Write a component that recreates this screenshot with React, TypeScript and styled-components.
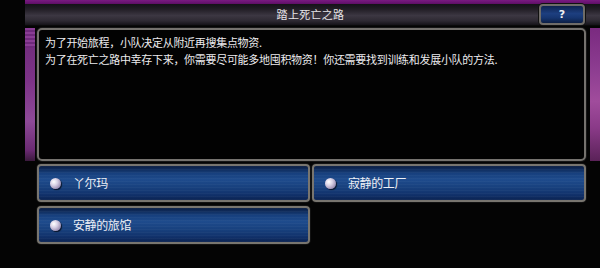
import React from 'react'
import styled, { createGlobalStyle } from 'styled-components'

const GlobalStyle = createGlobalStyle`
  html, body {
    margin: 0;
    padding: 0;
    background: #050505;
  }
  body {
    font-family: "Noto Sans CJK SC", "Noto Sans", sans-serif;
  }
`

const choices = [
  { id: 'yama', label: '丫尔玛' },
  { id: 'factory', label: '寂静的工厂' },
  { id: 'inn', label: '安静的旅馆' },
]

const App: React.FC = () => {
  return (
    <>
      <GlobalStyle />
      <StyledScreen>
        <StyledTopBar />
        <StyledHeader>
          <StyledTitle>踏上死亡之路</StyledTitle>
          <StyledHelpButton>?</StyledHelpButton>
        </StyledHeader>
        <StyledBody>
          <StyledSideStrip side="left" />
          <StyledPanel>
            <StyledLine>为了开始旅程，小队决定从附近再搜集点物资.</StyledLine>
            <StyledLine>为了在死亡之路中幸存下来，你需要尽可能多地囤积物资！你还需要找到训练和发展小队的方法.</StyledLine>
          </StyledPanel>
          <StyledSideStrip side="right" />
        </StyledBody>
        <StyledChoices>
          {choices.map(c => (
            <StyledChoice key={c.id}>
              <StyledBullet />
              <StyledChoiceLabel>{c.label}</StyledChoiceLabel>
            </StyledChoice>
          ))}
        </StyledChoices>
      </StyledScreen>
    </>
  )
}

const StyledScreen = styled.div`
  width: 600px;
  height: 268px;
  padding-left: 25px;
  box-sizing: border-box;
  background: #040404;
  display: flex;
  flex-direction: column;
  overflow: hidden;
`

const StyledTopBar = styled.div`
  height: 4px;
  background: linear-gradient(180deg, #7a1a82 0%, #5e0f66 100%);
`

const StyledHeader = styled.div`
  height: 21px;
  display: flex;
  align-items: center;
  justify-content: center;
  position: relative;
  background: linear-gradient(
    180deg,
    #141218 0%,
    #221e26 25%,
    #3c3742 55%,
    #2e2a33 80%,
    #151318 100%
  );
  border-bottom: 1px solid #0a0a0a;
`

const StyledTitle = styled.div`
  color: #e6e4e8;
  font-size: 11px;
  line-height: 21px;
  letter-spacing: 0.3px;
  margin-left: -4px;
`

const StyledHelpButton = styled.div`
  position: absolute;
  right: 15px;
  top: 0;
  width: 42px;
  height: 17px;
  border: 2px solid #6f6c68;
  border-radius: 4px;
  box-shadow: 0 0 0 1px #111;
  background: linear-gradient(180deg, #0f2450 0%, #1d3f80 45%, #163570 70%, #0c1e44 100%);
  color: #f2f2f2;
  font-family: "DejaVu Sans", sans-serif;
  font-weight: bold;
  font-size: 11px;
  line-height: 17px;
  text-align: center;
`

const StyledBody = styled.div`
  display: flex;
  margin-top: 2px;
  height: 133px;
`

const StyledSideStrip = styled.div<{ side: 'left' | 'right' }>`
  width: 10px;
  margin-left: ${props => (props.side === 'right' ? '4px' : '0')};
  margin-right: ${props => (props.side === 'left' ? '2px' : '0')};
  background: ${props =>
    props.side === 'left'
      ? `repeating-linear-gradient(180deg, #8a3d95 0px, #8a3d95 2px, #6f2a7c 2px, #6f2a7c 4px) 0 0 / 100% 20px no-repeat,
         linear-gradient(180deg, #6e2b7a 0%, #7d3388 40%, #8e4a98 70%, #6a2a72 92%, #3a1a3c 100%)`
      : `linear-gradient(180deg, #7a2a80 0%, #8c3c90 30%, #a04c9c 55%, #8a3a88 75%, #5a2258 100%)`};
`

const StyledPanel = styled.div`
  flex: 0 0 549px;
  box-sizing: border-box;
  border: 2px solid #75726e;
  border-radius: 5px;
  box-shadow: 0 0 0 1px #161616;
  background: #020202;
  padding: 4px 6px;
`

const StyledLine = styled.div`
  color: #ecebee;
  font-size: 11px;
  line-height: 17px;
  letter-spacing: -0.3px;
  white-space: nowrap;
`

const StyledChoices = styled.div`
  display: grid;
  grid-template-columns: 273px 274px;
  grid-auto-rows: 38px;
  column-gap: 2px;
  row-gap: 4px;
  margin-left: 12px;
  margin-top: 3px;
`

const StyledChoice = styled.div`
  box-sizing: border-box;
  display: flex;
  align-items: center;
  border: 2px solid #78756f;
  border-radius: 4px;
  box-shadow: 0 0 0 1px #121212;
  background:
    repeating-linear-gradient(180deg, rgba(255, 255, 255, 0.03) 0px, rgba(255, 255, 255, 0.03) 1px, transparent 1px, transparent 3px),
    linear-gradient(180deg, #0a1d42 0%, #17407e 22%, #1e4b8c 40%, #173f7c 65%, #11316a 85%, #0b2352 100%);
  padding-left: 11px;
`

const StyledBullet = styled.div`
  width: 11px;
  height: 11px;
  border-radius: 50%;
  background: radial-gradient(circle at 35% 35%, #ffffff 0%, #d9d2e6 35%, #9a8cb0 75%, #6a5c80 100%);
  box-shadow: 1px 1px 1px rgba(0, 0, 0, 0.7);
`

const StyledChoiceLabel = styled.div`
  margin-left: 12px;
  color: #eef0f6;
  font-size: 12px;
  line-height: 16px;
  letter-spacing: -0.4px;
`

export default App
